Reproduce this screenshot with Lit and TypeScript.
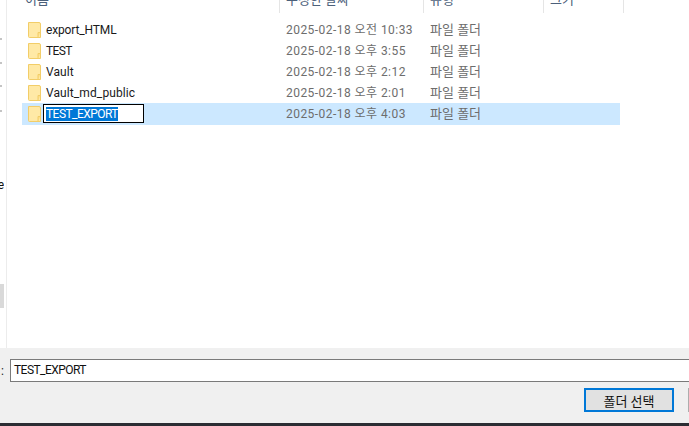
import { LitElement, html, css } from "lit";
import { customElement } from "lit/decorators.js";
import { classMap } from "lit/directives/class-map.js";

const rows = [
  { name: "export_HTML", date: "2025-02-18 오전 10:33", fit: "slight" },
  { name: "TEST", date: "2025-02-18 오후 3:55", fit: "caps" },
  { name: "Vault", date: "2025-02-18 오후 2:12", fit: "" },
  { name: "Vault_md_public", date: "2025-02-18 오후 2:01", fit: "" },
];

const folder = html`<svg class="folder" width="13" height="16" viewBox="0 0 13 16">
  <path d="M.5.5H11A1.5 1.5 0 0 1 12.5 2V15.5H1.5A1 1 0 0 1 .5 14.5Z" fill="#ffe9a6" stroke="#f2cd68"/>
  <path d="M10 15.5V10.5H12.5" fill="#ffdf86" stroke="#f2cd68"/>
</svg>`;

@customElement("app-root")
export class AppRoot extends LitElement {
  static styles = css`
    :host {
      display: flex;
      flex-direction: column;
      width: 689px;
      height: 426px;
      overflow: hidden;
      background: #fff;
      font-family: Roboto, "Noto Sans CJK KR", sans-serif;
      font-size: 12px;
      color: #1a1a1a;
    }
    .main { flex: 1; display: flex; min-height: 0; }
    .nav {
      width: 6px;
      border-right: 1px solid #ececec;
      flex: none;
      position: relative;
    }
    .tick { position: absolute; left: 0; width: 2px; height: 2px; background: #c4c4c4; }
    .nav-letter {
      position: absolute;
      left: 0;
      top: 178px;
      line-height: 14px;
      width: 4px;
      overflow: hidden;
      color: #111;
      direction: rtl;
    }
    .nav-thumb { position: absolute; left: 0; top: 284px; width: 4px; height: 24px; background: #d9d9d9; }
    .content { flex: 1; min-width: 0; display: flex; flex-direction: column; }
    .header { height: 13px; display: flex; align-items: flex-end; overflow: hidden; margin-bottom: 6px; }
    .hcell {
      height: 13px;
      display: flex;
      align-items: flex-end;
      border-right: 1px solid #e5e5e5;
      box-sizing: border-box;
      color: #4c607a;
      line-height: 17px;
      font-size: 13px;
      padding-left: 6px;
      flex: none;
    }
    .hcell span { display: block; margin-bottom: 5px; white-space: nowrap; }
    .h-name { width: 273px; padding-left: 18px; }
    .h-date { width: 144px; }
    .h-type { width: 120px; }
    .h-size { width: 80px; }
    .list { display: flex; flex-direction: column; padding-left: 15px; width: 598px; }
    .row { height: 21px; display: flex; align-items: center; }
    .row.sel { height: 22px; padding-bottom: 1px; box-sizing: border-box; background: #cce8ff; }
    .folder { margin-left: 6px; flex: none; }
    .name { width: 240px; margin-left: 5px; flex: none; white-space: nowrap; letter-spacing: .1px; }
    .name.slight { letter-spacing: -.15px; }
    .name.caps { letter-spacing: -.6px; }
    .date { width: 144px; color: #6d6d6d; flex: none; white-space: nowrap; letter-spacing: .45px; margin-bottom: 2px; }
    .type { color: #6d6d6d; white-space: nowrap; font-size: 13px; margin-bottom: 2px; }
    .edit {
      width: 243px;
      margin-left: 2px;
      flex: none;
      display: flex;
    }
    .edit-box {
      width: 101px;
      height: 19px;
      box-sizing: border-box;
      border: 1px solid #000;
      background: #fff;
      padding: 2px 0 0 2px;
      line-height: 14px;
      letter-spacing: -.55px;
    }
    .edit-box span { background: #0078d7; color: #fff; display: inline-block; height: 14px; }
    .bottom {
      flex: none;
      height: 78px;
      background: #f0f0f0;
      box-sizing: border-box;
      padding-top: 11px;
      display: flex;
      flex-direction: column;
      border-bottom: 3px solid #2b2d33;
    }
    .field { display: flex; height: 23px; align-items: center; }
    .colon { width: 10px; flex: none; padding-left: 1px; box-sizing: border-box; color: #222; }
    .input {
      flex: 1;
      height: 23px;
      margin-right: -2px;
      box-sizing: border-box;
      border: 1px solid #7a7a7a;
      background: #fff;
      padding-left: 3px;
      line-height: 20px;
      color: #111;
      letter-spacing: -.55px;
    }
    .actions { display: flex; justify-content: flex-end; margin-top: 6px; gap: 14px; }
    .btn {
      width: 90px;
      height: 24px;
      box-sizing: border-box;
      border: 2px solid #0078d7;
      background: #e1e1e1;
      display: flex;
      align-items: center;
      justify-content: center;
      color: #111;
      font-size: 13px;
    }
    .btn2 { width: 1px; height: 24px; background: #adadad; }
  `;

  render() {
    return html`
      <div class="main">
        <div class="nav">
          ${[38, 62, 85, 110].map((t) => html`<i class="tick" style="top:${t}px"></i>`)}
          <span class="nav-letter">e</span>
          <i class="nav-thumb"></i>
        </div>
        <div class="content">
          <div class="header">
            <div class="hcell h-name"><span>이름</span></div>
            <div class="hcell h-date"><span>수정한 날짜</span></div>
            <div class="hcell h-type"><span>유형</span></div>
            <div class="hcell h-size"><span>크기</span></div>
          </div>
          <div class="list">
            ${rows.map(
              (r) => html`<div class="row">
                ${folder}
                <div class=${classMap({ name: true, slight: r.fit === "slight", caps: r.fit === "caps" })}>${r.name}</div>
                <div class="date">${r.date}</div>
                <div class="type">파일 폴더</div>
              </div>`
            )}
            <div class="row sel">
              ${folder}
              <div class="edit"><div class="edit-box"><span>TEST_EXPORT</span></div></div>
              <div class="date">2025-02-18 오후 4:03</div>
              <div class="type">파일 폴더</div>
            </div>
          </div>
        </div>
      </div>
      <div class="bottom">
        <div class="field">
          <span class="colon">:</span>
          <div class="input">TEST_EXPORT</div>
        </div>
        <div class="actions">
          <div class="btn">폴더 선택</div>
          <div class="btn2"></div>
        </div>
      </div>
    `;
  }
}
